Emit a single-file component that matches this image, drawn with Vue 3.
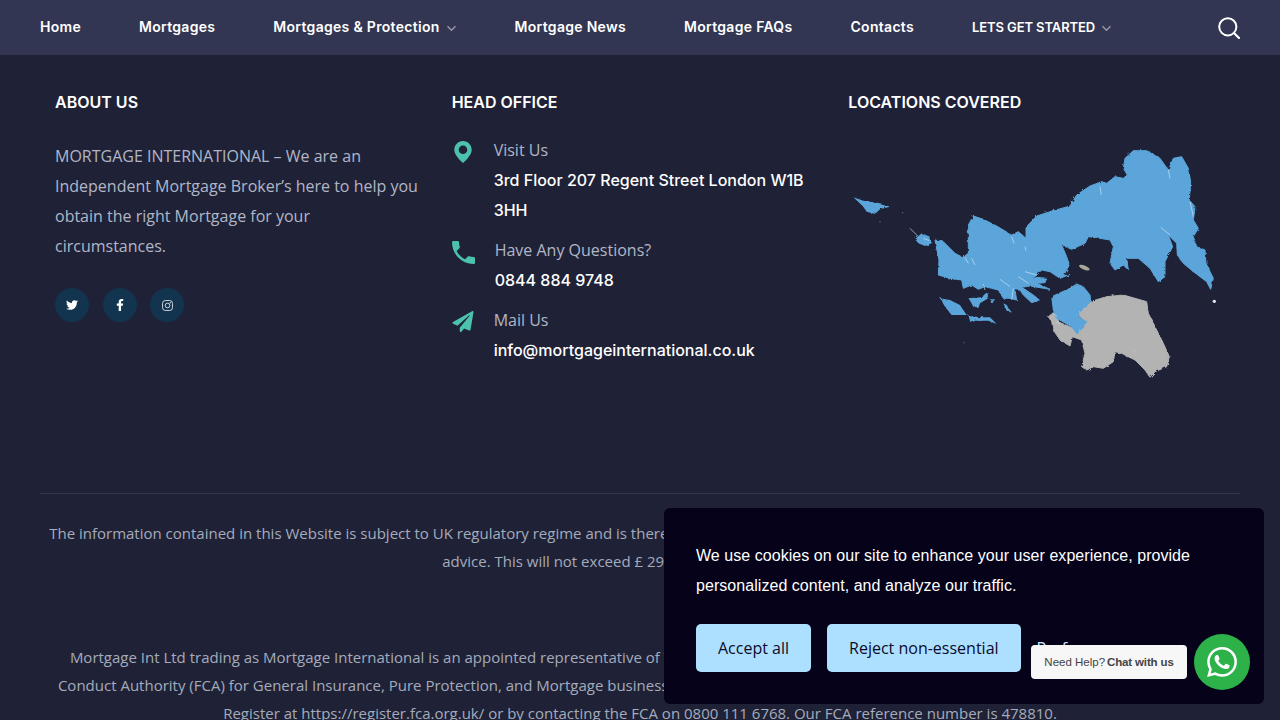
<script setup>
const navItems = [
  { label: 'Home' },
  { label: 'Mortgages' },
  { label: 'Mortgages & Protection', caret: true },
  { label: 'Mortgage News' },
  { label: 'Mortgage FAQs' },
  { label: 'Contacts' },
  { label: 'LETS GET STARTED', caret: true, caps: true },
]
</script>

<template>
  <div class="page">
    <nav class="nav">
      <ul class="menu">
        <li v-for="item in navItems" :key="item.label" class="menu-item" :class="{ caps: item.caps }">
          <span>{{ item.label }}</span>
          <svg v-if="item.caret" class="caret" viewBox="0 0 11 7" width="11" height="7">
            <path d="M1.5 1.2 5.500 5.200 9.500 1.200" fill="none" stroke="#9799a9" stroke-width="1.4" />
          </svg>
        </li>
      </ul>
      <svg class="search" viewBox="0 0 22 22" width="22" height="22">
        <circle cx="9.8" cy="9.8" r="8.6" fill="none" stroke="#fff" stroke-width="2" />
        <path d="M16 16l5 5" stroke="#fff" stroke-width="2.2" stroke-linecap="round" />
      </svg>
    </nav>

    <footer class="footer">
      <div class="columns">
        <section class="col">
          <h3>ABOUT US</h3>
          <p class="about">MORTGAGE INTERNATIONAL – We are an Independent Mortgage Broker’s here to help you obtain the right Mortgage for your circumstances.</p>
          <div class="socials">
            <a class="social">
              <svg viewBox="0 0 512 512" width="12" height="12"><path fill="#fff" d="M459.37 151.716c.325 4.548.325 9.097.325 13.645 0 138.72-105.583 298.558-298.558 298.558-59.452 0-114.68-17.219-161.137-47.106 8.447.974 16.568 1.299 25.34 1.299 49.055 0 94.213-16.568 130.274-44.832-46.132-.975-84.792-31.188-98.112-72.772 6.498.974 12.995 1.624 19.818 1.624 9.421 0 18.843-1.3 27.614-3.573-48.081-9.747-84.143-51.98-84.143-102.985v-1.299c13.969 7.797 30.214 12.67 47.431 13.319-28.264-18.843-46.781-51.005-46.781-87.391 0-19.492 5.197-37.36 14.294-52.954 51.655 63.675 129.3 105.258 216.365 109.807-1.624-7.797-2.599-15.918-2.599-24.04 0-57.828 46.782-104.934 104.934-104.934 30.213 0 57.502 12.67 76.67 33.137 23.715-4.548 46.456-13.32 66.599-25.34-7.798 24.366-24.366 44.833-46.132 57.827 21.117-2.273 41.584-8.122 60.426-16.243-14.292 20.791-32.161 39.308-52.628 54.253z" /></svg>
            </a>
            <a class="social">
              <svg viewBox="0 0 320 512" width="8" height="12"><path fill="#fff" d="M279.14 288l14.22-92.66h-88.91v-60.13c0-25.35 12.42-50.06 52.24-50.06h40.42V6.26S260.43 0 225.36 0c-73.22 0-121.08 44.38-121.08 124.72v70.62H22.89V288h81.39v224h100.17V288z" /></svg>
            </a>
            <a class="social">
              <svg viewBox="0 0 12 12" width="11" height="11"><rect x=".6" y=".6" width="10.8" height="10.8" rx="3" fill="none" stroke="#dfe3e8" stroke-width="1" /><circle cx="6" cy="6" r="2.5" fill="none" stroke="#dfe3e8" stroke-width="1" /><circle cx="9" cy="3" r=".7" fill="#dfe3e8" /></svg>
            </a>
          </div>
        </section>

        <section class="col">
          <h3>HEAD OFFICE</h3>
          <div class="contact">
            <svg class="contact-icon" viewBox="0 0 24 24" width="22" height="22"><path fill="#4cc2ae" fill-rule="evenodd" d="M12 0C6.500 0 2.500 4.400 2.500 9.800 2.500 16 12 24 12 24s9.500-8 9.500-14.200C21.500 4.400 17.500 0 12 0zm0 14.300a4.700 4.700 0 1 1 0-9.400 4.700 4.700 0 0 1 0 9.400z" /></svg>
            <div>
              <div class="label">Visit Us</div>
              <div class="value">3rd Floor 207 Regent Street London W1B 3HH</div>
            </div>
          </div>
          <div class="contact">
            <svg class="contact-icon" viewBox="3 3 18 18" width="23" height="23"><path fill="#4cc2ae" d="M6.620 10.790c1.440 2.830 3.760 5.140 6.590 6.590l2.200-2.200c.27-.27.67-.36 1.020-.24 1.120.37 2.330.57 3.570.57.55 0 1 .45 1 1V20c0 .55-.45 1-1 1-9.390 0-17-7.610-17-17 0-.55.45-1 1-1h3.500c.55 0 1 .45 1 1 0 1.250.2 2.450.57 3.570.11.35.03.74-.25 1.020l-2.200 2.200z" /></svg>
            <div>
              <div class="label">Have Any Questions?</div>
              <div class="value">0844 884 9748</div>
            </div>
          </div>
          <div class="contact">
            <svg class="contact-icon" viewBox="0 0 512 512" width="22" height="21"><path fill="#4cc2ae" d="M476 3.200L12.500 270.600c-18.100 10.400-15.800 35.600 2.200 43.200L121 358.400l287.300-253.200c5.500-4.900 13.300 2.600 8.600 8.300L176 407v80.500c0 23.600 28.500 32.900 42.500 15.800L282 426l124.600 52.200c14.200 6 30.400-2.900 33-18.200l72-432C515 7.800 493.300-6.800 476 3.200z" /></svg>
            <div>
              <div class="label">Mail Us</div>
              <div class="value">info@mortgageinternational.co.uk</div>
            </div>
          </div>
        </section>

        <section class="col">
          <h3>LOCATIONS COVERED</h3>
          <svg class="map" viewBox="0 0 1200 750" width="400" height="250">
            <defs>
              <filter id="rough" x="-5%" y="-5%" width="110%" height="110%" color-interpolation-filters="sRGB">
                <feTurbulence type="fractalNoise" baseFrequency="0.09" numOctaves="2" seed="4" />
                <feDisplacementMap in="SourceGraphic" scale="9" />
              </filter>
            </defs>
            <g filter="url(#rough)" stroke-linejoin="round">
              <path fill="#b3b3b3" stroke="#b3b3b3" stroke-width="3" d="M625 530 640 518 652 530 656 546 700 565 712 580 735 545 715 525 722 510 750 485 800 470 850 465 885 475 920 485 925 520 945 560 970 610 988 650 980 680 945 695 930 712 915 690 885 660 845 640 825 635 820 665 790 685 760 680 740 690 725 680 735 640 725 600 697 590 690 618 660 600 640 570 635 545Z" />
              <path fill="#5ba5da" stroke="#5ba5da" stroke-width="3" d="M635 470 690 445 710 432 730 440 750 465 752 485 715 520 720 535 740 545 712 582 695 560 650 535 640 510Z" />
              <path fill="#5ba5da" stroke="#5ba5da" stroke-width="3" d="M285 300 310 305 345 340 368 352 385 340 385 255 400 228 430 238 470 258 515 285 535 275 558 295 558 262 590 228 640 212 690 198 710 165 750 138 785 125 800 130 825 110 850 115 862 105 850 85 855 55 880 32 920 32 960 55 985 90 1000 55 1025 50 1045 85 1052 125 1048 180 1065 200 1060 240 1075 265 1060 290 1070 320 1095 330 1098 370 1120 415 1112 448 1100 425 1060 395 1030 370 1012 345 1010 310 985 285 998 320 975 365 975 410 955 425 930 385 895 355 860 355 865 390 850 375 825 390 810 370 820 320 810 300 780 295 745 290 735 310 695 328 665 315 680 350 688 375 670 408 690 403 660 415 630 395 605 390 575 420 590 412 620 415 615 428 590 430 630 448 570 438 545 442 580 465 598 480 575 488 550 465 540 450 525 450 530 480 510 475 490 475 475 450 455 445 435 440 415 448 395 435 370 445 365 420 330 415 295 405 297 360Z" />
              <path fill="#5ba5da" d="M300 475 330 480 360 495 380 525 355 525 335 525 315 500ZM385 525 415 532 450 532 470 552 445 542 405 542 392 550ZM385 475 425 472 442 455 445 475 420 490 415 505 400 500 392 485ZM450 478 465 478 455 492ZM490 490 500 495 515 518 500 512ZM40 172 70 182 90 185 120 190 150 200 120 208 105 222 80 215 68 198ZM225 298 245 280 270 290 275 310 255 318 235 310Z" />
            </g>
            <ellipse cx="733" cy="383" rx="17" ry="6" transform="rotate(22 733 383)" fill="#a9a798" />
            <circle cx="1123" cy="484" r="5" fill="#dfe7ee" />
            <circle cx="120" cy="245" r="1.500" fill="#8fa6bb" />
            <circle cx="188" cy="218" r="1.500" fill="#8fa6bb" />
            <circle cx="372" cy="608" r="1.500" fill="#8fa6bb" />
            <g fill="none" stroke="#cfe4f3" stroke-width="2">
              <path d="M515 290 522 310M555 320 558 332M780 140 784 165M985 90 990 115M1050 185 1060 230M962 262 990 285M370 345 385 370M395 355 405 375M555 395 590 405M535 410 565 430M480 418 510 440M520 445 515 480M430 432 435 450" />
              <path d="M250 295 268 302M640 520 652 530M648 545 660 550M880 630 884 634M210 265 235 290" />
            </g>
          </svg>
        </section>
      </div>

      <div class="legal">
        <p>The information contained in this Website is subject to UK regulatory regime and is therefore targeted at consumers based in the UK. We will charge a fee for a mortgage,<br />advice. This will not exceed £ 299 and is payable upfront.</p>
        <p class="second">Mortgage Int Ltd trading as Mortgage International is an appointed representative of The Openwork Partnership Limited, authorised, and regulated by the Financial<br />Conduct Authority (FCA) for General Insurance, Pure Protection, and Mortgage business only. You can check this information online by visiting the UK Financial Services<br />Register at https://register.fca.org.uk/ or by contacting the FCA on 0800 111 6768. Our FCA reference number is 478810.</p>
      </div>
    </footer>

    <div class="cookie">
      <p>We use cookies on our site to enhance your user experience, provide personalized content, and analyze our traffic.</p>
      <div class="cookie-actions">
        <button class="cookie-btn">Accept all</button>
        <button class="cookie-btn">Reject non-essential</button>
        <span class="prefs">Preferences</span>
      </div>
    </div>

    <div class="chat">
      <span class="chat-tip">Need Help? <strong>Chat with us</strong></span>
      <span class="chat-btn">
        <svg viewBox="0 0 24 24" width="30" height="30"><path fill="#fff" d="M17.472 14.382c-.297-.149-1.758-.867-2.030-.967-.273-.099-.471-.148-.67.15-.197.297-.767.966-.94 1.164-.173.199-.347.223-.644.075-.297-.15-1.255-.463-2.390-1.475-.883-.788-1.480-1.761-1.653-2.059-.173-.297-.018-.458.13-.606.134-.133.298-.347.446-.52.149-.174.198-.298.298-.497.099-.198.05-.371-.025-.52-.075-.149-.669-1.612-.916-2.207-.242-.579-.487-.5-.669-.51-.173-.008-.371-.01-.57-.01-.198 0-.52.074-.792.372-.272.297-1.040 1.016-1.040 2.479 0 1.462 1.065 2.875 1.213 3.074.149.198 2.096 3.2 5.077 4.487.709.306 1.262.489 1.694.625.712.227 1.360.195 1.871.118.571-.085 1.758-.719 2.006-1.413.248-.694.248-1.289.173-1.413-.074-.124-.272-.198-.57-.347m-5.421 7.403h-.004a9.870 9.870 0 01-5.031-1.378l-.361-.214-3.741.982.998-3.648-.235-.374a9.860 9.860 0 01-1.510-5.260c.001-5.450 4.436-9.884 9.888-9.884 2.640 0 5.122 1.030 6.988 2.898a9.825 9.825 0 012.893 6.994c-.003 5.450-4.437 9.884-9.885 9.884m8.413-18.297A11.815 11.815 0 0012.050 0C5.495 0 .16 5.335.157 11.892c0 2.096.547 4.142 1.588 5.945L.057 24l6.305-1.654a11.882 11.882 0 005.683 1.448h.005c6.554 0 11.890-5.335 11.893-11.893a11.821 11.821 0 00-3.480-8.413z" /></svg>
      </span>
    </div>
  </div>
</template>

<style>
html, body { margin: 0; height: 720px; overflow: hidden; background: #1f2237; }
</style>

<style scoped>
.page {
  position: relative;
  width: 1280px;
  height: 720px;
  overflow: hidden;
  background: #1f2237;
  font-family: "Open Sans", sans-serif;
}
.nav {
  height: 55px;
  background: #333652;
  display: flex;
  align-items: center;
  justify-content: space-between;
  padding: 0 40px;
}
.menu {
  display: flex;
  gap: 58px;
  list-style: none;
  margin: 0 0 2px;
  padding: 0;
}
.menu-item {
  display: flex;
  align-items: center;
  gap: 6px;
  color: #fff;
  font: 600 14px/20px Inter, sans-serif;
  letter-spacing: .3px;
  white-space: nowrap;
}
.menu-item.caps {
  font-size: 13px;
  letter-spacing: -.1px;
}
.caret { margin-top: 4px; }
.search { display: block; }
.columns {
  display: grid;
  grid-template-columns: repeat(3, minmax(0, 1fr));
  box-sizing: border-box;
  width: 1200px;
  height: 439px;
  margin: 0 auto;
  padding-right: 10px;
  border-bottom: 1px solid #33364d;
}
.col { padding: 35px 15px 0; }
h3 {
  margin: 0 0 21px;
  color: #fff;
  font: 600 16px/24px Inter, sans-serif;
}
.about {
  margin: 0;
  padding-top: 6px;
  color: #b1b6c6;
  font-size: 16px;
  line-height: 30px;
}
.socials {
  display: flex;
  gap: 13.5px;
  margin-top: 27px;
}
.social {
  display: flex;
  align-items: center;
  justify-content: center;
  width: 34px;
  height: 34px;
  border-radius: 50%;
  background: #12344f;
}
.contact {
  display: flex;
  gap: 20px;
  margin-bottom: 10px;
}
.contact-icon { flex: none; margin-top: 6px; }
.label {
  color: #b1b6c6;
  font-size: 16px;
  line-height: 30px;
}
.value {
  color: #fff;
  font: 550 16px/30px Inter, sans-serif;
}
.map {
  display: block;
  margin: 26px 0 0 -8px;
}
.legal {
  padding-top: 25px;
  text-align: center;
  color: #a5abbb;
  font-size: 15px;
  line-height: 28px;
  white-space: nowrap;
}
.legal p { margin: 0; }
.legal .second { margin-top: 68px; }
.cookie {
  position: absolute;
  left: 664px;
  top: 508px;
  width: 600px;
  height: 196px;
  box-sizing: border-box;
  padding: 33px 32px 0;
  border-radius: 6px;
  background: #05021a;
  color: #fff;
}
.cookie p {
  margin: 0 0 23px;
  font: 16px/30px "Liberation Sans", sans-serif;
  letter-spacing: .05px;
}
.cookie-actions {
  display: flex;
  align-items: center;
  gap: 16px;
}
.cookie-btn {
  height: 48px;
  padding: 0 22px;
  border: 0;
  border-radius: 5px;
  background: #ade0ff;
  color: #0b0b2b;
  font: 16px "Open Sans", sans-serif;
}
.prefs {
  font-size: 16px;
  color: #c6e8ff;
}
.chat {
  position: absolute;
  left: 1031px;
  top: 634px;
  display: flex;
  align-items: center;
  gap: 7px;
}
.chat-tip {
  display: flex;
  align-items: center;
  justify-content: center;
  gap: 2px;
  width: 156px;
  height: 34px;
  border-radius: 4px;
  background: #f7f7f7;
  color: #444;
  font: 11.5px "Liberation Sans", sans-serif;
}
.chat-tip strong { letter-spacing: -.15px; }
.chat-btn {
  display: flex;
  align-items: center;
  justify-content: center;
  width: 56px;
  height: 56px;
  border-radius: 50%;
  background: #2db24a;
}
</style>
